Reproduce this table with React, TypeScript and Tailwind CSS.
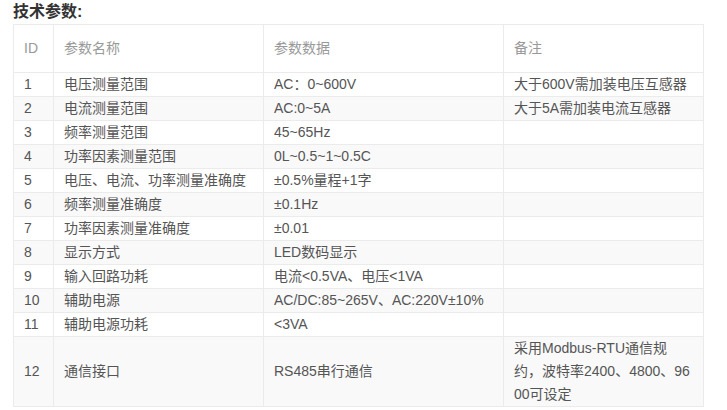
const rows: [string, string, string, string][] = [
  ["1", "电压测量范围", "AC：0~600V", "大于600V需加装电压互感器"],
  ["2", "电流测量范围", "AC:0~5A", "大于5A需加装电流互感器"],
  ["3", "频率测量范围", "45~65Hz", ""],
  ["4", "功率因素测量范围", "0L~0.5~1~0.5C", ""],
  ["5", "电压、电流、功率测量准确度", "±0.5%量程+1字", ""],
  ["6", "频率测量准确度", "±0.1Hz", ""],
  ["7", "功率因素测量准确度", "±0.01", ""],
  ["8", "显示方式", "LED数码显示", ""],
  ["9", "输入回路功耗", "电流<0.5VA、电压<1VA", ""],
  ["10", "辅助电源", "AC/DC:85~265V、AC:220V±10%", ""],
  ["11", "辅助电源功耗", "<3VA", ""],
  ["12", "通信接口", "RS485串行通信", "采用Modbus-RTU通信规约，波特率2400、4800、9600可设定"],
];

export default function App() {
  return (
    <div className="w-[727px] h-[410px] bg-white overflow-hidden font-['Liberation_Sans','Noto_Sans_CJK_SC',sans-serif]">
      <h3 className="pl-[13px] text-[16px] leading-[24px] font-bold text-[#333]">技术参数:</h3>
      <table className="ml-[13px] w-[690px] table-fixed border-collapse text-[14px] leading-[23px] text-[#555]">
        <colgroup>
          <col className="w-[40px]" />
          <col className="w-[210px]" />
          <col className="w-[240px]" />
          <col className="w-[200px]" />
        </colgroup>
        <thead>
          <tr className="h-[48px] text-[#999]">
            <th className="border border-[#ebebeb] px-[10px] text-left font-normal">ID</th>
            <th className="border border-[#ebebeb] px-[10px] text-left font-normal">参数名称</th>
            <th className="border border-[#ebebeb] px-[10px] text-left font-normal">参数数据</th>
            <th className="border border-[#ebebeb] px-[10px] text-left font-normal">备注</th>
          </tr>
        </thead>
        <tbody>
          {rows.map((r, i) => (
            <tr key={r[0]} className={i % 2 === 1 ? "bg-[#f9f9f9]" : "bg-white"}>
              <td className="border border-[#ebebeb] px-[10px] py-0 align-middle">{r[0]}</td>
              <td className="border border-[#ebebeb] px-[10px] py-0 align-middle">{r[1]}</td>
              <td className="border border-[#ebebeb] px-[10px] py-0 align-middle">{r[2]}</td>
              <td className="border border-[#ebebeb] px-[10px] py-0 align-middle break-all">{r[3]}</td>
            </tr>
          ))}
        </tbody>
      </table>
    </div>
  );
}
